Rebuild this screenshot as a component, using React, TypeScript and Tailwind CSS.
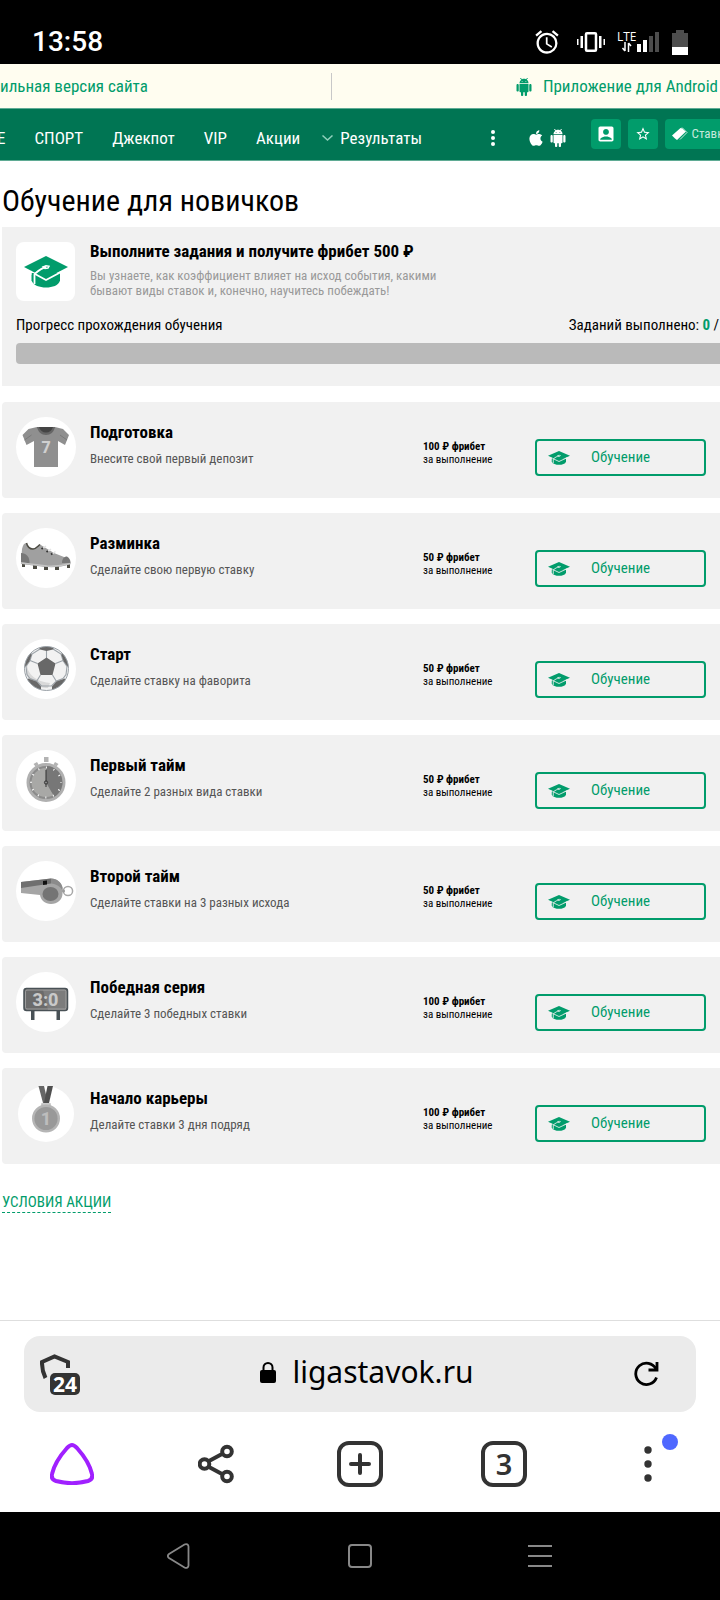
import type { ReactNode } from "react";
import { FaApple } from "react-icons/fa";
import { MdAccountBox, MdAlarm, MdStarBorder } from "react-icons/md";

type Task = {
  title: string;
  text: string;
  reward: number;
  icon: ReactNode;
};

function Cap({ className, cut }: { className: string; cut: string }) {
  return (
    <svg viewBox="0 0 44 32" preserveAspectRatio="none" className={className} aria-hidden="true">
      <path d="M7.5 17v7.500c2 5 8 7 14.500 7s12.500-2 14-7V17z" fill="currentColor" />
      <path d="M22 0 44 11 22 22.500 0 11z" fill="currentColor" />
      <g className={cut} fill="none" strokeWidth="1.800">
        <path d="M38 15.500 22 24 11 18" />
        <path d="M22 11c-3 .5-8 4-11.500 7v10" />
        <path d="M7 14.800v4" strokeWidth="1" />
      </g>
      <path d="m19 10.800 3-1 3 .5-1 1.700-3 .5z" className={cut} fill="none" strokeWidth="1.400" />
    </svg>
  );
}

function Android({ className }: { className: string }) {
  return (
    <svg viewBox="0 0 24 24" className={className} fill="currentColor" aria-hidden="true">
      <path d="M6 18c0 .55.45 1 1 1h1v3.500c0 .83.67 1.500 1.500 1.500s1.500-.67 1.500-1.500V19h2v3.500c0 .83.67 1.500 1.500 1.500s1.500-.67 1.500-1.500V19h1c.55 0 1-.45 1-1V8H6v10zM3.500 8C2.670 8 2 8.670 2 9.500v7c0 .83.67 1.500 1.500 1.500S5 17.330 5 16.500v-7C5 8.670 4.330 8 3.500 8zm17 0c-.83 0-1.500.67-1.500 1.500v7c0 .83.67 1.500 1.500 1.500s1.500-.67 1.500-1.500v-7c0-.83-.67-1.500-1.500-1.500zm-4.970-5.840 1.300-1.300c.2-.2.2-.51 0-.71-.2-.2-.51-.2-.71 0l-1.480 1.480C13.850 1.230 12.950 1 12 1c-.96 0-1.860.23-2.660.63L7.850.15c-.2-.2-.51-.2-.71 0-.2.2-.2.51 0 .71l1.310 1.310C6.970 3.260 6 5.010 6 7h12c0-1.990-.97-3.750-2.470-4.840zM10 5H9V4h1v1zm5 0h-1V4h1v1z" />
    </svg>
  );
}

function Tile({ children, cy = 30, r = 30 }: { children: ReactNode; cy?: number; r?: number }) {
  return (
    <svg viewBox="0 0 60 60" className="size-[60px] shrink-0" aria-hidden="true">
      <circle cx="30" cy={cy} r={r} fill="#fff" />
      {children}
    </svg>
  );
}

const shirt = (
  <Tile>
    <path d="M21 10h18l8 2 6 6-4 10-7-4v26H18V24l-7.500 4-4-10 6-6z" fill="#8f8f8f" />
    <path d="m8.500 23 7-5M51 23l-7-5" stroke="#7a7a7a" />
    <path d="M21 10h18c-1 5-4.500 8-9 8s-8-3-9-8z" fill="#666" />
    <path d="M23 10h14c-1 3.500-3.500 5.500-7 5.500s-6-2-7-5.500z" fill="#444" />
    <text x="30" y="36" textAnchor="middle" fontSize="16" fontWeight="800" fontFamily="Roboto" fill="#d0d0d0">7</text>
  </Tile>
);

const shoe = (
  <Tile>
    <path d="M6 34h3v5H6zM17 36h4v5h-4zM28 37h4v5h-4zM39 37h4v5h-4zM51 35h3v5h-3z" fill="#4b4a42" />
    <path d="M5 33 6 21c1-4 2-6 4.500-6 1 4 3 6 6.500 6 3 0 5-3 7-4.500l14 8.500 10 4c4 1.500 6 3 6.500 7-8 3-16 3.500-25 3L5 36z" fill="#a0a0a0" />
    <path d="M5 25c5 0 9 4 8.500 10.500L5 34z" fill="#777" />
    <path d="M46 35c0-4 2-6.500 5-6.500 2.500 1.500 3.500 3.500 3.500 6.500z" fill="#777" />
    <path d="m5 35 26 3c8 .5 16-.5 23.500-2.500" stroke="#c4c4c4" strokeWidth="1.500" fill="none" />
    <path d="M10.500 15c1 4 3 6 6.500 6 3 0 5-3 7-4.500" stroke="#4b4a42" strokeWidth="1.500" fill="none" />
    <path d="m26 21 4-3M31 24l4-3M35.500 26.500l4-3" stroke="#e4e4e4" strokeWidth="1.500" />
    <path d="m25.500 21 1.500-1M30.500 24l1.500-1M35 26.500l1.500-1" stroke="#333" strokeWidth="2" />
  </Tile>
);

const ball = (
  <Tile>
    <clipPath id="ball">
      <circle cx="30.500" cy="29.500" r="22" />
    </clipPath>
    <circle cx="30.500" cy="29.500" r="22" fill="#f2f2f2" />
    <g clipPath="url(#ball)">
      <path d="M12 22c-3 8 3 20 22 22l-2 5c-12 0-22-8-22-18z" fill="#d9d9d9" />
      <path d="M30.500 11v8M39.500 24.500l7.500-3M36.500 36l4 6.500M24.500 36l-4 6.500M21.500 24.500l-7.500-3M24 10l-8 5-2 6.500-4 6 1 8 3 4 6.500 2.500 5 5h10l5-5 6.500-2.500 3-4 1-8-4-6-2-6.500-8-5" stroke="#9ba2a8" strokeWidth="1.100" fill="none" />
      <path d="m30.500 18.500 9 6L36.500 36h-12l-3-11.500zM22 6h17l-2 4.500-6.500 1.500-6.500-1.500zM8 18l7-7 .5 5-2 6-4.500 6H7zM53 18l-7-7-.5 5 2 6 4.500 6h2zM12 39.500l8.500 3 4.500 5v5L10 48zM49 39.500l-8.500 3-4.500 5v5l15-4.500z" fill="#686868" />
    </g>
    <circle cx="30.500" cy="29.500" r="22" fill="none" stroke="#9ba2a8" />
  </Tile>
);

const stopwatch = (
  <Tile>
    <path d="M28 7h4.500v5H28zM17.500 14l3.500-2 1.500 2.500-3 2zM42.500 14 39 12l-1.500 2.500 3 2z" fill="#b3b3b3" />
    <circle cx="30" cy="32.500" r="18" fill="#a8a8a6" stroke="#b0b0b0" strokeWidth="3" />
    <circle cx="30" cy="32.500" r="15.500" fill="#a8a8a6" stroke="#8b8b8b" strokeWidth="2" />
    <path d="M30 32.500v-16.500a16.500 16.500 0 0 1 8.300 30.700z" fill="#777" />
    <circle cx="30" cy="32.500" r="15" fill="none" stroke="#fff" strokeWidth="2" strokeDasharray="1 6.854" strokeDashoffset=".5" />
    <path d="M30 20v17" stroke="#333" strokeWidth="1" />
    <circle cx="30" cy="32.500" r="1.600" fill="#888" stroke="#333" />
  </Tile>
);

const whistle = (
  <Tile>
    <circle cx="52" cy="30" r="4.600" fill="none" stroke="#a8a8a8" strokeWidth="1.500" />
    <path d="m5 21 30-3.500c6 0 10.500 4 11.500 9v6c0 6-5 10.500-11.500 10.500-6 0-10-3.500-11-9L5 32z" fill="#a5a5a5" />
    <path d="m5 21 30-3.500v5L5 27z" fill="#6f6f6f" />
    <path d="M35 17.500c6 0 10.500 4 11.500 9v3c-2-4-6-6.500-11.500-7z" fill="#8b8b8b" />
    <path d="m27 20 4-.5v4l-4 .5z" fill="#111" />
    <ellipse cx="34.500" cy="33" rx="8" ry="7" fill="#747474" />
    <circle cx="47.500" cy="30" r="1.500" fill="#999" />
  </Tile>
);

const scoreboard = (
  <Tile>
    <path d="M15 38h3.500v10H15zM40.500 38H44v10h-3.500z" fill="#495156" />
    <rect x="8" y="16.500" width="43.500" height="22" rx="2.500" fill="#6b6b6b" stroke="#495156" strokeWidth="1.500" />
    <path d="m27 18 5 20h18V18z" fill="#7c7c7c" />
    <rect x="9.500" y="18" width="40.500" height="19" rx="1.500" fill="none" stroke="#aaa" strokeWidth=".8" />
    <text x="29.500" y="33.500" textAnchor="middle" fontSize="18" fontWeight="800" fontFamily="Roboto" fill="#c9c9c9">3:0</text>
  </Tile>
);

const medal = (
  <Tile cy={31} r={28}>
    <path d="M22.500 3h5.500l4 17h-5z" fill="#666" />
    <path d="M37 3h-5.500L28 20h5z" fill="#4f4f4f" />
    <path d="M26 23v-2h8v2" fill="none" stroke="#bbb" strokeWidth="1.500" />
    <circle cx="30" cy="35.500" r="12.800" fill="#999" stroke="#b5b5b5" strokeWidth="2.400" />
    <text x="30" y="42" textAnchor="middle" fontSize="18" fontWeight="800" fontFamily="Roboto" fill="#bdbdbd">1</text>
  </Tile>
);

const tasks: Task[] = [
  { title: "Подготовка", text: "Внесите свой первый депозит", reward: 100, icon: shirt },
  { title: "Разминка", text: "Сделайте свою первую ставку", reward: 50, icon: shoe },
  { title: "Старт", text: "Сделайте ставку на фаворита", reward: 50, icon: ball },
  { title: "Первый тайм", text: "Сделайте 2 разных вида ставки", reward: 50, icon: stopwatch },
  { title: "Второй тайм", text: "Сделайте ставки на 3 разных исхода", reward: 50, icon: whistle },
  { title: "Победная серия", text: "Сделайте 3 победных ставки", reward: 100, icon: scoreboard },
  { title: "Начало карьеры", text: "Делайте ставки 3 дня подряд", reward: 100, icon: medal },
];

function StatusBar() {
  return (
    <div className="flex h-16 items-end justify-between bg-black px-8 pb-1.5 text-white">
      <span className="font-[Roboto,sans-serif] text-[28px] leading-8 font-medium">13:58</span>
      <div className="flex h-8 items-center">
        <MdAlarm className="mr-4 size-7" />
        <svg viewBox="0 0 28 20" className="mr-3 h-5 w-7" aria-hidden="true">
          <path d="M0 7h1.500v6H0zM3.500 4H6v12H3.500zM22 4h2.500v12H22zM26.500 7H28v6h-1.500z" fill="currentColor" />
          <rect x="9" y="1.250" width="10" height="17.500" rx="1" fill="none" stroke="currentColor" strokeWidth="2.500" />
        </svg>
        <svg viewBox="0 0 43 22" className="mr-3 h-[22px] w-[43px]" aria-hidden="true">
          <text x="0" y="10" fontSize="12" fontFamily="Open Sans" fill="currentColor">LTE</text>
          <path d="M8 11v9M5.500 17 8 20M11.500 21v-9M14 15l-2.500-3" stroke="currentColor" strokeWidth="1.500" fill="none" />
          <path d="M20 13h4v8h-4zM26 9h4v12h-4z" fill="currentColor" />
          <path d="M32 5h4v16h-4zM38 1h4v20h-4z" fill="#4d4d4d" />
        </svg>
        <svg viewBox="0 0 16 25" className="h-[25px] w-4" aria-hidden="true">
          <path d="M4 0h8v3h4v14H0V3h4z" fill="#4d4d4d" />
          <path d="M0 17h16v8H0z" fill="currentColor" />
        </svg>
      </div>
    </div>
  );
}

function SiteHeader() {
  return (
    <header>
      <div className="flex h-11 items-center bg-[#fffdf0] text-[17px] text-[#019c6b]">
        <a href="#mobile" className="w-[46%] pt-0.5 whitespace-nowrap">ильная версия сайта</a>
        <span className="h-[27px] w-px bg-[#c8c8c8]" />
        <a href="#android" className="flex flex-1 items-center justify-end gap-2.5 pt-0.5 pr-0.5 whitespace-nowrap">
          <Android className="size-[18px]" />
          Приложение для Android
        </a>
      </div>
      <nav className="flex h-[53px] items-start overflow-hidden border-y border-[#5fab94] bg-[#007553] text-[17px] text-white">
        <div className="flex shrink-0 items-center gap-[29px] pt-[17px] leading-6">
          <a href="#live" className="-ml-[3px]">Е</a>
          <a href="#sport">СПОРТ</a>
          <a href="#jackpot">Джекпот</a>
          <a href="#vip">VIP</a>
          <a href="#promo">Акции</a>
        </div>
        <a href="#results" className="ml-[22px] flex shrink-0 items-center gap-[7px] pt-[17px] leading-6">
          <svg viewBox="0 0 11 6" className="h-1.5 w-[11px]" aria-hidden="true">
            <path d="m.5.500 5 4.500 5-4.500" fill="none" stroke="#8fd0bb" strokeWidth="1.500" />
          </svg>
          Результаты
        </a>
        <div className="ml-auto flex shrink-0 items-start">
          <button type="button" aria-label="Ещё" className="mt-[21px] mr-8">
            <svg viewBox="0 0 4 16" className="h-4 w-1" fill="currentColor">
              <circle cx="2" cy="2" r="2" />
              <circle cx="2" cy="8" r="2" />
              <circle cx="2" cy="14" r="2" />
            </svg>
          </button>
          <a href="#ios" aria-label="iOS" className="mt-5 mr-1"><FaApple className="size-[18px]" /></a>
          <a href="#apk" aria-label="Android" className="mt-5 mr-6"><Android className="size-[18px]" /></a>
          <div className="-mr-[17px] flex gap-[7px] pt-2.5">
            <button type="button" aria-label="Профиль" className="grid size-[30px] place-items-center rounded bg-[#019c6b]">
              <MdAccountBox className="size-5" />
            </button>
            <button type="button" aria-label="Избранное" className="grid size-[30px] place-items-center rounded bg-[#019c6b]">
              <MdStarBorder className="size-4" />
            </button>
            <button type="button" className="flex h-[30px] items-center gap-1 rounded bg-[#019c6b] px-[7px] text-[13px] text-[#c5e8dc]">
              <svg viewBox="0 0 16 14" className="h-3.5 w-4" aria-hidden="true">
                <path d="M0 8.500 8.500 1l2 .5L12 3l2 1.500L5 13l-2-1.500-1-1z" fill="#fff" />
                <path d="m10 .5 5 5-7 7" fill="none" stroke="#c5e8dc" />
              </svg>
              Ставки
            </button>
          </div>
        </div>
      </nav>
    </header>
  );
}

function Summary() {
  return (
    <section className="overflow-hidden bg-[#f1f1f1] pt-[15px] pb-[22px] pl-3.5">
      <div className="flex gap-[15px]">
        <div className="grid size-[59px] shrink-0 place-items-center rounded-lg bg-white">
          <Cap className="h-8 w-11 text-[#019c6b]" cut="stroke-white" />
        </div>
        <div>
          <h2 className="text-[17px] leading-[18px] font-bold">Выполните задания и получите фрибет 500 ₽</h2>
          <p className="mt-2 max-w-[360px] text-[13px] leading-[15px] text-[#999]">
            Вы узнаете, как коэффициент влияет на исход события, какими бывают виды ставок и, конечно, научитесь побеждать!
          </p>
        </div>
      </div>
      <div className="mt-3.5 -mr-2.5 flex justify-between text-[15px] leading-5 whitespace-nowrap">
        <span id="progress">Прогресс прохождения обучения</span>
        <span>Заданий выполнено: <b className="text-[#019c6b]">0</b> / 7</span>
      </div>
      <div role="progressbar" aria-labelledby="progress" aria-valuenow={0} aria-valuemax={7} className="mt-2 -mr-2.5 h-[21px] rounded bg-[#bababa]" />
    </section>
  );
}

function TaskCard({ task }: { task: Task }) {
  return (
    <li className="flex h-24 rounded-l bg-[#f1f1f1] px-3.5 pt-[15px]">
      {task.icon}
      <div className="ml-3.5 flex-1">
        <h3 className="mt-1.5 text-[17px] leading-[18px] font-bold">{task.title}</h3>
        <p className="mt-2.5 text-[13px] leading-4 text-[#555]">{task.text}</p>
      </div>
      <p className="mt-[23px] w-28 text-[11px] leading-[13px]">
        <b>{task.reward} ₽ фрибет</b>
        <br />
        за выполнение
      </p>
      <button type="button" className="mt-[22px] flex h-[37px] w-[171px] items-center rounded-sm border-2 border-[#019c6b] pl-[11px] text-[15px] text-[#019c6b]">
        <Cap className="mr-[21px] h-3.5 w-[22px]" cut="stroke-[#f1f1f1]" />
        Обучение
      </button>
    </li>
  );
}

function BrowserBar() {
  return (
    <footer className="border-t border-[#dedede] bg-white pt-[15px] text-[#333]">
      <div className="mx-6 flex h-19 items-center justify-between rounded-2xl bg-[#ebebeb] pr-9 pl-4">
        <button type="button" aria-label="Защита">
          <svg viewBox="0 0 40 42" className="h-[42px] w-10">
            <path d="M28 15V9L14.500 3.500 2 9c-.2 7 1 11 3.500 16" fill="none" stroke="currentColor" strokeWidth="4" />
            <rect x="10" y="20" width="30" height="22" rx="5" fill="currentColor" />
            <text x="25" y="38.500" textAnchor="middle" fontSize="21" fontWeight="700" fontFamily="Noto Sans" fill="#fff">24</text>
          </svg>
        </button>
        <a href="#site" className="ml-5 flex items-center gap-4 pb-1 font-['Noto_Sans',sans-serif] text-[30px] leading-10 text-black">
          <svg viewBox="0 0 16 21" className="h-[21px] w-4" aria-hidden="true">
            <rect y="8" width="16" height="13" rx="2" fill="currentColor" />
            <path d="M3.500 9V5.500a4.500 4.500 0 0 1 9 0V9" fill="none" stroke="currentColor" strokeWidth="2" />
          </svg>
          ligastavok.ru
        </a>
        <button type="button" aria-label="Обновить" className="text-black">
          <svg viewBox="0 0 26 26" className="size-[26px]" fill="none" stroke="currentColor" strokeWidth="2.800">
            <path d="M22.500 16.500A10.700 10.700 0 1 1 22 8" />
            <path d="M23 1v8h-8.500" />
          </svg>
        </button>
      </div>
      <div className="grid h-[100px] grid-cols-5 place-items-center pt-1">
        <button type="button" aria-label="Алиса">
          <svg viewBox="0 0 44 42" className="h-[42px] w-11" fill="none" stroke="#a020ff" strokeWidth="4">
            <path d="M22 2c2 0 3 1 5 3 8 9 13 17 15 26 1 4-1 6-4 7-10 2.700-22 2.700-32 0-3-1-5-3-4-7C4 22 9 14 17 5c2-2 3-3 5-3z" />
          </svg>
        </button>
        <button type="button" aria-label="Поделиться">
          <svg viewBox="0 0 36 40" className="h-10 w-9" fill="none" stroke="currentColor" strokeWidth="4">
            <path d="M11 17 24 10M11 23l13 7" />
            <circle cx="6.500" cy="20" r="4.800" />
            <circle cx="29" cy="7.500" r="4.800" />
            <circle cx="29" cy="32.500" r="4.800" />
          </svg>
        </button>
        <button type="button" aria-label="Новая вкладка" className="grid size-[46px] place-items-center rounded-xl border-4 border-[#333]">
          <svg viewBox="0 0 22 22" className="size-[22px]" stroke="currentColor" strokeWidth="4" strokeLinecap="round">
            <path d="M2 11h18M11 2v18" />
          </svg>
        </button>
        <button type="button" className="grid size-[46px] place-items-center rounded-xl border-4 border-[#333] font-['Noto_Sans',sans-serif] text-[29px] leading-8 font-semibold">
          3
        </button>
        <button type="button" aria-label="Меню" className="relative">
          <svg viewBox="0 0 8 36" className="h-9 w-2" fill="currentColor">
            <circle cx="4" cy="4" r="3.700" />
            <circle cx="4" cy="18" r="3.700" />
            <circle cx="4" cy="32" r="3.700" />
          </svg>
          <span className="absolute -top-3 left-[18px] size-4 rounded-full bg-[#4f68ff]" />
        </button>
      </div>
    </footer>
  );
}

function SystemNav() {
  return (
    <div className="grid h-[88px] grid-cols-3 place-items-center bg-black px-[12.5%] text-[#888]">
      <button type="button" aria-label="Назад">
        <svg viewBox="0 0 26 26" className="size-[26px]" fill="none" stroke="currentColor" strokeWidth="1.800">
          <path d="M2 11 17.500 1.500c2-1 4 0 4 2v19c0 2-2 3-4 2L2 15c-1.500-1.200-1.500-2.800 0-4z" />
        </svg>
      </button>
      <button type="button" aria-label="Домой" className="size-6 rounded border-2 border-[#888]" />
      <button type="button" aria-label="Недавние">
        <svg viewBox="0 0 24 22" className="h-[22px] w-6" stroke="currentColor" strokeWidth="2">
          <path d="M0 1h24M0 11h24M0 21h24" />
        </svg>
      </button>
    </div>
  );
}

export default function App() {
  return (
    <div className="flex min-h-screen flex-col overflow-hidden bg-white font-['Roboto_Condensed','Liberation_Sans_Narrow',Roboto,sans-serif] text-black">
      <StatusBar />
      <SiteHeader />
      <main className="flex-1 pl-0.5">
        <h1 className="pt-[22px] pb-2 text-[30px] leading-9">Обучение для новичков</h1>
        <Summary />
        <ul className="mt-4 flex flex-col gap-[15px]">
          {tasks.map((task) => (
            <TaskCard key={task.title} task={task} />
          ))}
        </ul>
        <a href="#terms" className="mt-7 inline-block border-b border-dashed border-[#019c6b] text-[15px] leading-5 text-[#019c6b]">
          УСЛОВИЯ АКЦИИ
        </a>
      </main>
      <BrowserBar />
      <SystemNav />
    </div>
  );
}
